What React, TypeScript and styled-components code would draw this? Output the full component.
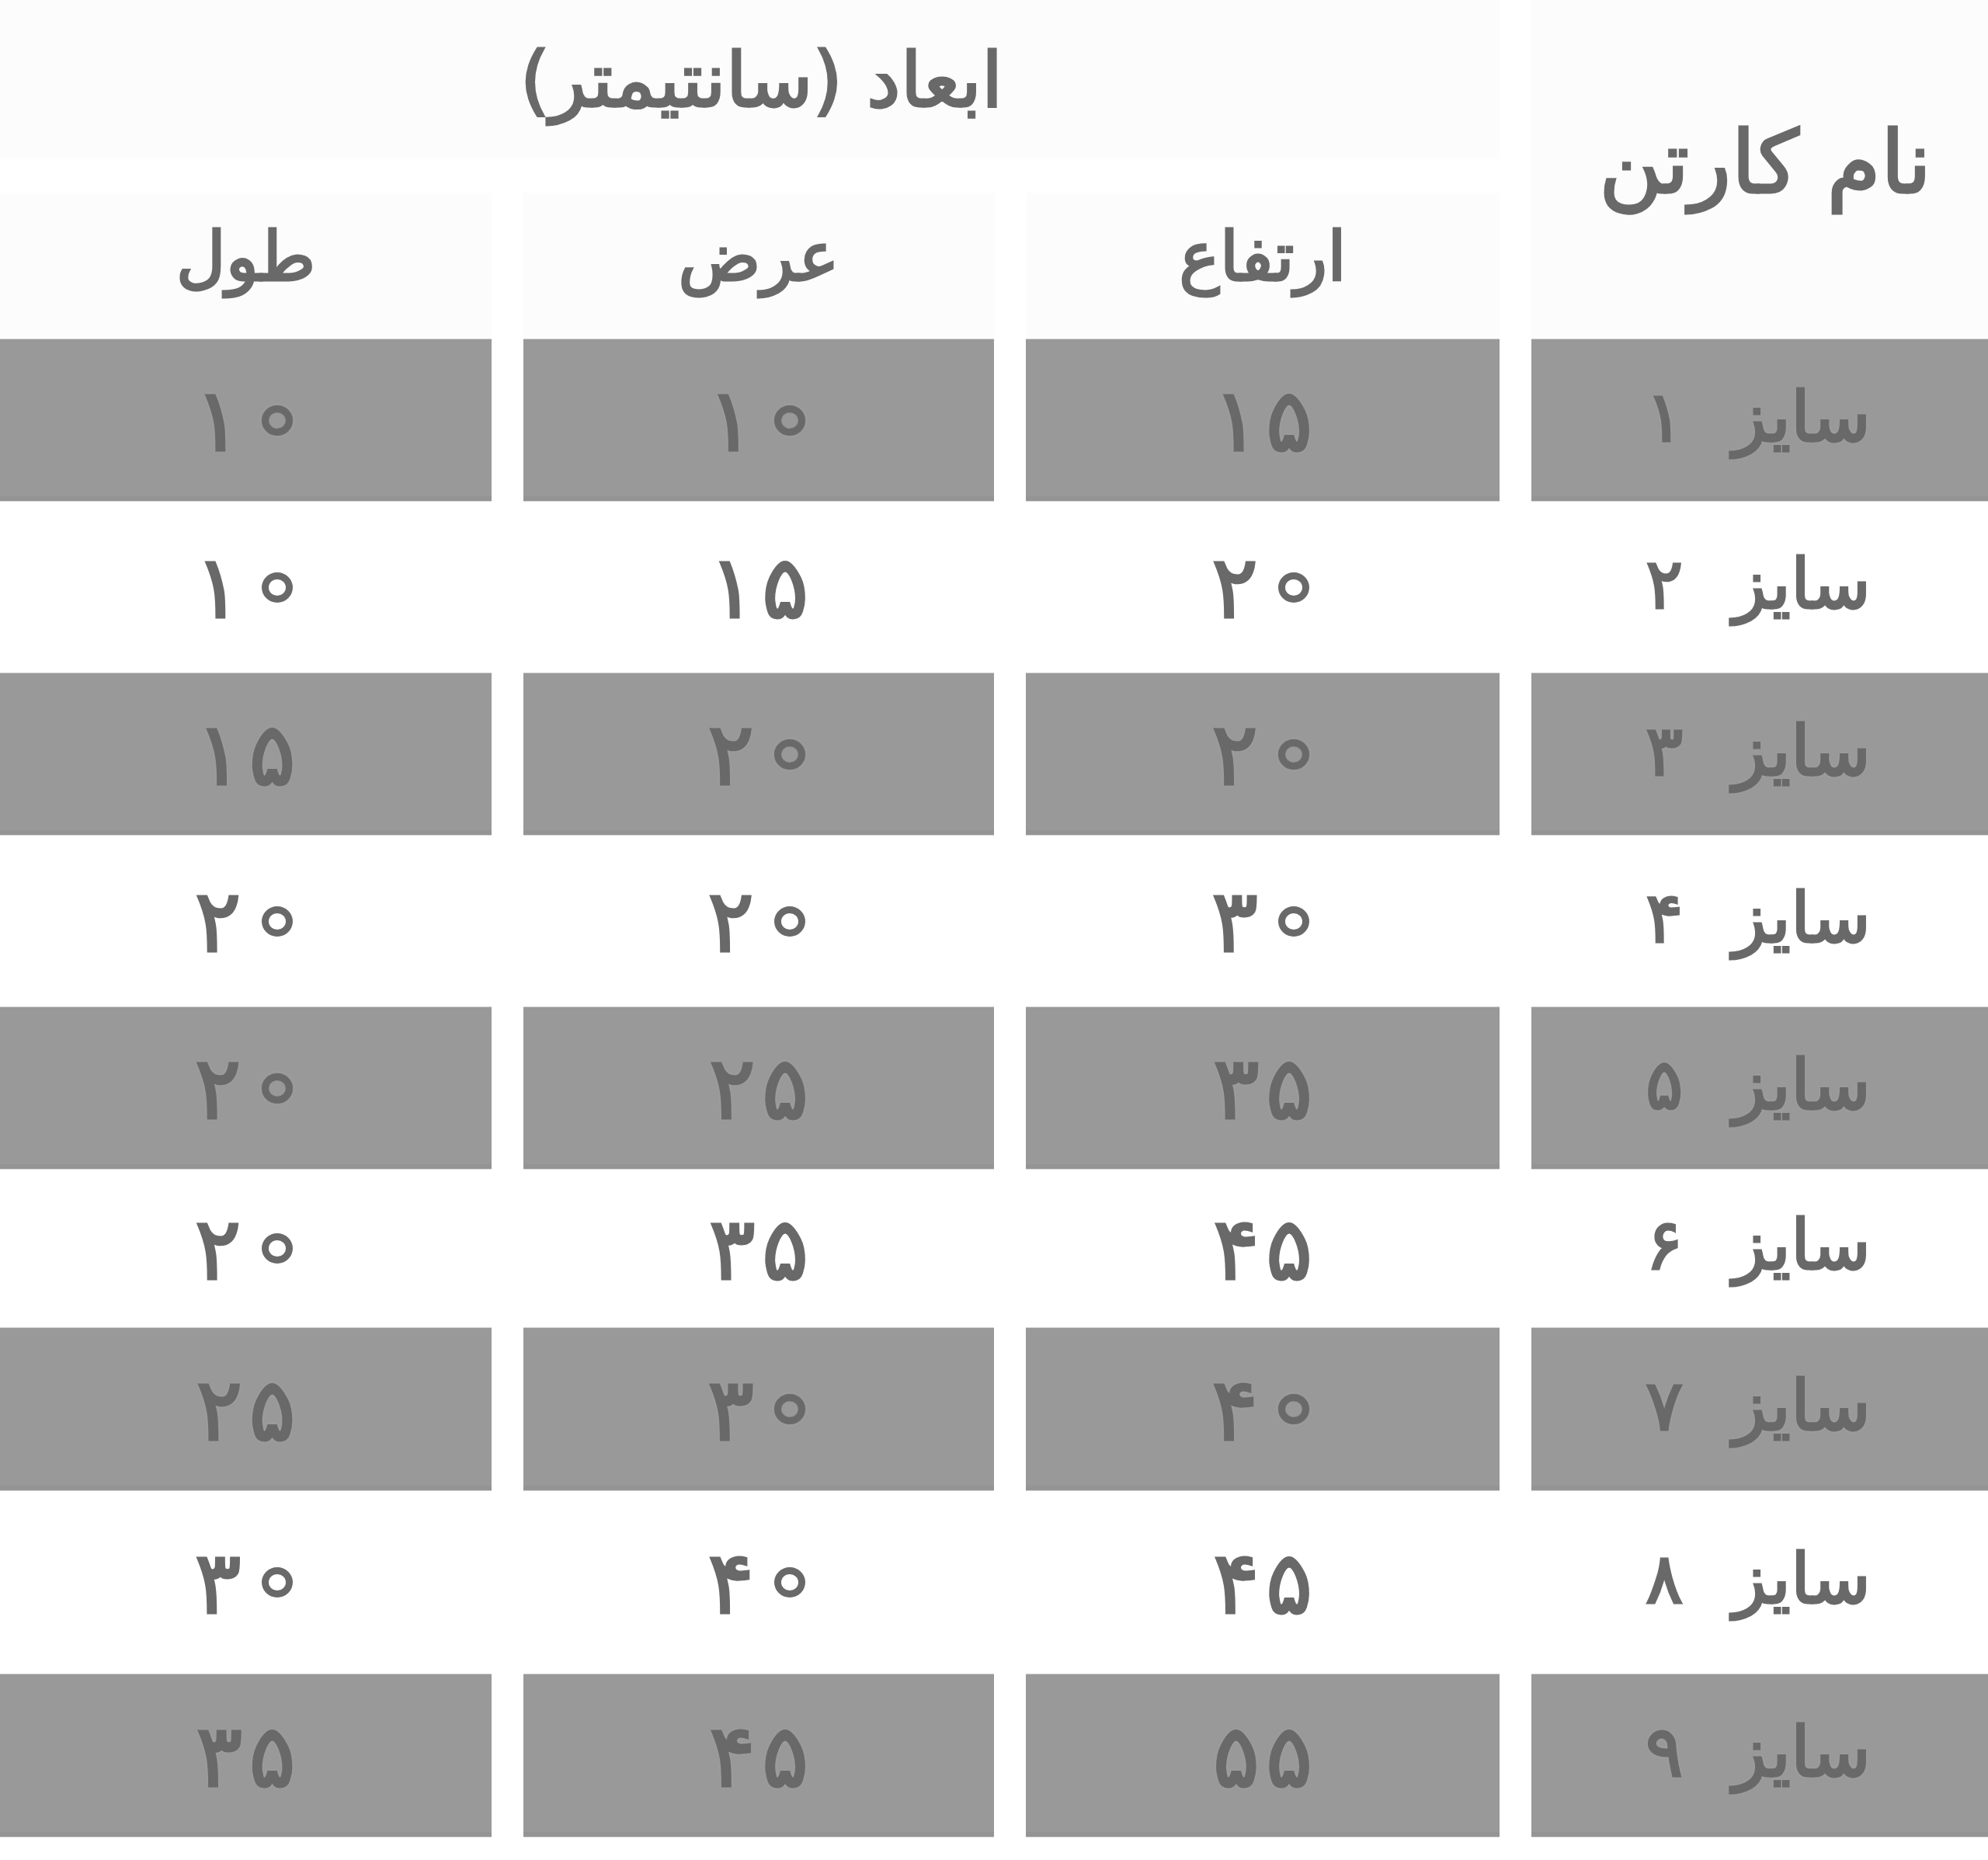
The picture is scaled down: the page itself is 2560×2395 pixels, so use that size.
import React from 'react';
import styled, { createGlobalStyle } from 'styled-components';

const GlobalStyle = createGlobalStyle`
  html, body {
    margin: 0;
    padding: 0;
    background: #ffffff;
  }
  body {
    font-family: "DejaVu Sans", "Noto Sans", sans-serif;
  }
`;

const textGray = '#696969';
const stripe = '#999999';

type Row = { name: string; height: string; width: string; length: string; rowHeight: number };

const rows: Row[] = [
  { name: '۱', height: '۱۵', width: '۱۰', length: '۱۰', rowHeight: 208 },
  { name: '۲', height: '۲۰', width: '۱۵', length: '۱۰', rowHeight: 222 },
  { name: '۳', height: '۲۰', width: '۲۰', length: '۱۵', rowHeight: 208 },
  { name: '۴', height: '۳۰', width: '۲۰', length: '۲۰', rowHeight: 222 },
  { name: '۵', height: '۳۵', width: '۲۵', length: '۲۰', rowHeight: 208 },
  { name: '۶', height: '۴۵', width: '۳۵', length: '۲۰', rowHeight: 205 },
  { name: '۷', height: '۴۰', width: '۳۰', length: '۲۵', rowHeight: 209 },
  { name: '۸', height: '۴۵', width: '۴۰', length: '۳۰', rowHeight: 237 },
  { name: '۹', height: '۵۵', width: '۴۵', length: '۳۵', rowHeight: 209 },
];

// DejaVu draws ۰ as a dot; the picture shows the open ring form, so the
// glyph stays as text and the ring is drawn round it.
const Digits = ({ value, striped }: { value: string; striped: boolean }) => (
  <Number>
    {Array.from(value).map((ch, i) =>
      ch === '۰' ? (
        <Zero key={i} $striped={striped}>
          {ch}
        </Zero>
      ) : (
        <span key={i}>{ch}</span>
      )
    )}
  </Number>
);

export default function App() {
  return (
    <Page dir="rtl">
      <GlobalStyle />
      <Header>
        <NameHead>نام کارتن</NameHead>
        <DimensionsHead>ابعاد (سانتیمتر)</DimensionsHead>
        <SubHead>ارتفاع</SubHead>
        <SubHead>عرض</SubHead>
        <SubHead>طول</SubHead>
      </Header>
      <Body>
        {rows.map((row, index) => {
          const striped = index % 2 === 0;
          return (
            <TableRow key={index} $h={row.rowHeight}>
              <Cell $striped={striped}>
                <SizeLabel>
                  <span>سایز</span>
                  <Digits value={row.name} striped={striped} />
                </SizeLabel>
              </Cell>
              <Cell $striped={striped}>
                <Digits value={row.height} striped={striped} />
              </Cell>
              <Cell $striped={striped}>
                <Digits value={row.width} striped={striped} />
              </Cell>
              <Cell $striped={striped}>
                <Digits value={row.length} striped={striped} />
              </Cell>
            </TableRow>
          );
        })}
      </Body>
    </Page>
  );
}

const Page = styled.div`
  width: 2560px;
  height: 2395px;
  background: #ffffff;
  color: ${textGray};
  overflow: hidden;
`;

const columns = `588px 610px 606px 633px`;

const Header = styled.div`
  display: grid;
  grid-template-columns: ${columns};
  grid-template-rows: 205px 189px;
  column-gap: 41px;
  row-gap: 43px;
`;

const HeadPanel = styled.div`
  display: flex;
  align-items: center;
  justify-content: center;
  background: #fcfcfc;
  color: ${textGray};
  -webkit-text-stroke: 3px ${textGray};
`;

const NameHead = styled(HeadPanel)`
  grid-row: 1 / span 2;
  font-size: 112px;
  padding-bottom: 20px;
  padding-left: 14px;
`;

const DimensionsHead = styled(HeadPanel)`
  grid-column: 2 / span 3;
  font-size: 98px;
  padding-left: 30px;
`;

const SubHead = styled(HeadPanel)`
  font-size: 88px;
  grid-row: 2;
  padding-bottom: 24px;
`;

const Body = styled.div`
  display: flex;
  flex-direction: column;
`;

const TableRow = styled.div<{ $h: number }>`
  display: grid;
  grid-template-columns: ${columns};
  column-gap: 41px;
  height: ${(p) => p.$h}px;
`;

const Cell = styled.div<{ $striped: boolean }>`
  display: flex;
  align-items: center;
  justify-content: center;
  box-sizing: border-box;
  font-size: 112px;
  -webkit-text-stroke: 3px ${textGray};
  background: ${(p) => (p.$striped ? stripe : 'transparent')};
  box-shadow: ${(p) =>
    p.$striped
      ? 'inset 0 -6px 0 #949494, 0 -1px 0 #cfcfcf, 0 1px 0 #d8d8d8'
      : 'none'};
  text-shadow: ${(p) =>
    p.$striped ? '0 0 1px #555555, 0 0 5px #a8a8a8' : 'none'};
`;

const Number = styled.span`
  display: inline-flex;
  direction: ltr;
  align-items: center;
  gap: 8px;
`;

const Zero = styled.span<{ $striped: boolean }>`
  display: inline-flex;
  align-items: center;
  justify-content: center;
  box-sizing: border-box;
  width: 40px;
  height: 39px;
  margin: 0 6px 0 18px;
  border: 9px solid ${textGray};
  border-radius: 50%;
  color: transparent;
  -webkit-text-stroke: 0;
  text-shadow: none;
  font-size: 12px;
  line-height: 12px;
  box-shadow: ${(p) =>
    p.$striped ? '0 0 1px #555555, inset 0 0 1px #555555, 0 0 4px #a8a8a8' : 'none'};
`;

const SizeLabel = styled.div`
  display: flex;
  direction: rtl;
  align-items: center;
  gap: 64px;
  font-size: 90px;
  padding-bottom: 10px;
  padding-right: 4px;
`;
